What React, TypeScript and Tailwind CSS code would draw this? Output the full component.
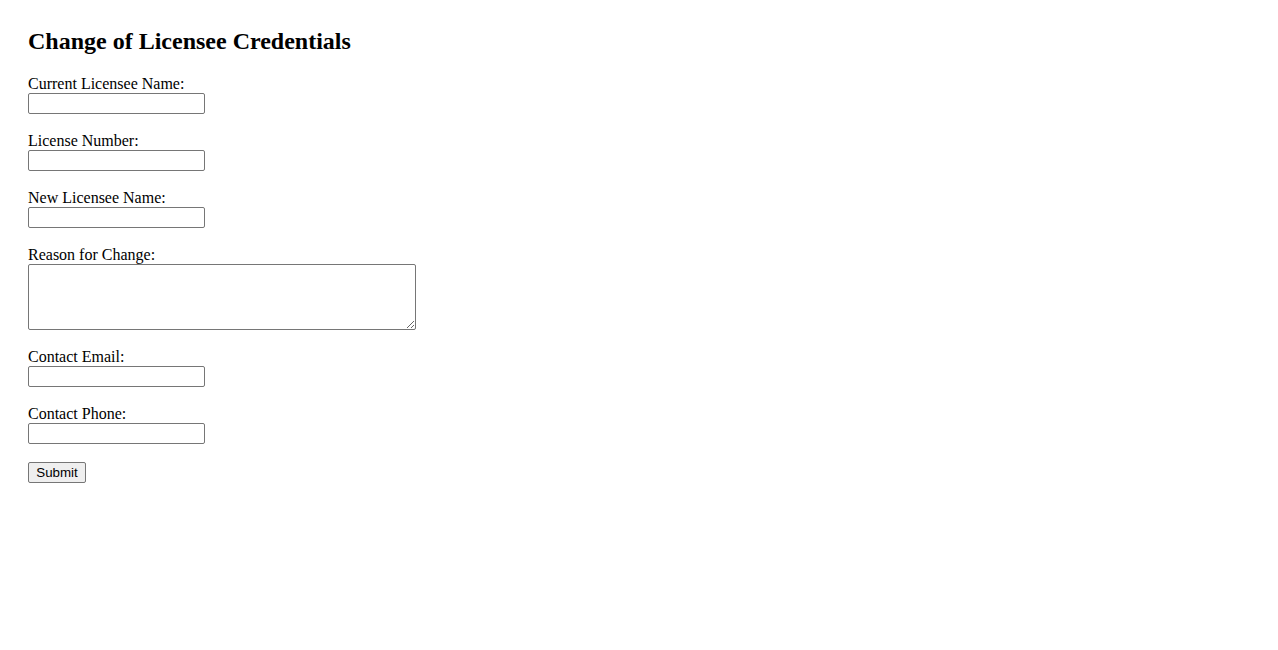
import React from "react";

const serif = { fontFamily: '"Liberation Serif", "Times New Roman", serif' };

function Field({ label, id }: { label: string; id: string }) {
  return (
    <div className="mb-[18px]">
      <label htmlFor={id} className="block h-[18px] text-[16px] leading-[18px] text-black">
        {label}
      </label>
      <input
        id={id}
        type="text"
        className="block h-[21px] w-[177px] rounded-[2px] border border-[#767676] bg-white px-[2px] text-[13px] outline-none"
      />
    </div>
  );
}

export default function App() {
  return (
    <div className="min-h-[650px] w-full bg-white p-[28px] text-black" style={serif}>
      <h2 className="mb-[20px] h-[27px] text-[24px] font-bold leading-[27px]">
        Change of Licensee Credentials
      </h2>
      <form onSubmit={(e) => e.preventDefault()}>
        <Field label="Current Licensee Name:" id="current" />
        <Field label="License Number:" id="number" />
        <Field label="New Licensee Name:" id="newname" />
        <div className="mb-[18px]">
          <label htmlFor="reason" className="block h-[18px] text-[16px] leading-[18px]">
            Reason for Change:
          </label>
          <textarea
            id="reason"
            className="block h-[66px] w-[388px] resize rounded-[2px] border border-[#767676] bg-white outline-none"
          />
        </div>
        <Field label="Contact Email:" id="email" />
        <Field label="Contact Phone:" id="phone" />
        <button
          type="submit"
          className="block h-[21px] w-[58px] rounded-[2px] border border-[#767676] bg-[#efefef] text-[13.33px] leading-[17px] text-black"
          style={{ fontFamily: '"Liberation Sans", Arial, sans-serif' }}
        >
          Submit
        </button>
      </form>
    </div>
  );
}
